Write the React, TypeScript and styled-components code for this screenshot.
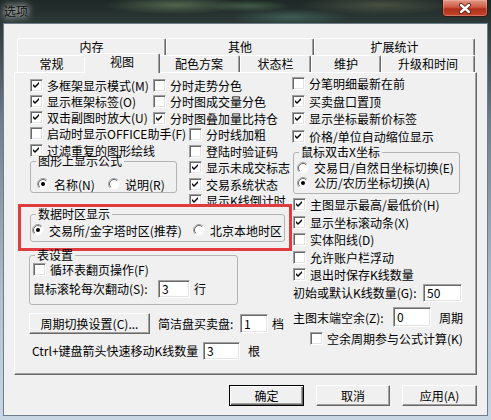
import React from 'react';
import styled, { createGlobalStyle } from 'styled-components';

const GlobalStyle = createGlobalStyle`
  html, body {
    margin: 0;
    padding: 0;
    background: #1f2a28;
  }

  body {
    font-family: "Noto Sans CJK SC", "Noto Sans", sans-serif;
    font-size: 12px;
    color: #000;
  }

  * {
    box-sizing: border-box;
  }
`;

const Window = styled.div`
  width: 491px;
  height: 420px;
  display: flex;
  flex-direction: column;
  overflow: hidden;
  padding: 0 3px 4px 3px;
  background:
    radial-gradient(ellipse 70px 9px at 175px 5px, rgba(140, 170, 120, 0.45), transparent),
    radial-gradient(ellipse 60px 8px at 290px 17px, rgba(90, 150, 130, 0.4), transparent),
    radial-gradient(ellipse 80px 10px at 380px 5px, rgba(160, 160, 120, 0.3), transparent),
    radial-gradient(ellipse 40px 6px at 250px 6px, rgba(110, 160, 110, 0.4), transparent),
    linear-gradient(180deg, #1e2826 0px, #2c3937 22px, #6d7d8a 120px, #b2c1d0 300px, #c8d6e4 420px);
`;

const TitleBar = styled.div`
  height: 23px;
  flex: none;
  display: flex;
  align-items: flex-start;
  justify-content: space-between;
  padding-left: 1px;
`;

const Title = styled.span`
  line-height: 22px;
  font-size: 12px;
  color: #111;
  text-shadow: 0 0 6px rgba(255, 255, 255, 0.95), 0 0 10px rgba(255, 255, 255, 0.8);
`;

const CloseBtn = styled.div`
  width: 46px;
  height: 18px;
  margin-top: -1px;
  border: 1px solid #3a1610;
  border-radius: 0 0 4px 4px;
  background: linear-gradient(180deg, #e09a88 0%, #cf5a44 45%, #b1301c 55%, #c2472e 100%);
  box-shadow: inset 0 0 0 1px rgba(255, 200, 190, 0.35);
  display: flex;
  align-items: center;
  justify-content: center;
`;

const Client = styled.div`
  flex: 1;
  background: #f0f0f0;
  border: 1px solid #6e7d8b;
  padding: 14px 0 0 10px;
`;

const TabStrip = styled.div`
  position: relative;
  z-index: 2;
  display: flex;
  flex-direction: column;
  margin-left: 3px;
  width: 458px;
`;

const TabRow = styled.div`
  display: flex;
  height: 17px;
  align-items: flex-end;
`;

const Tab = styled.div<{ $w: number; $active?: boolean }>`
  position: relative;
  z-index: ${(p) => (p.$active ? 3 : 1)};
  width: ${(p) => (p.$active ? p.$w + 4 : p.$w)}px;
  height: ${(p) => (p.$active ? 20 : 17)}px;
  margin: ${(p) => (p.$active ? '0 -2px -1px' : '0')};
  background: #f0f0f0;
  border-top: 1px solid #fff;
  border-left: 1px solid #fff;
  border-right: 1px solid #696969;
  border-radius: 2px 2px 0 0;
  box-shadow: inset -1px 0 #a0a0a0;
  text-align: center;
  line-height: 16px;
  white-space: nowrap;
`;

const Page = styled.div`
  position: relative;
  z-index: 1;
  width: 463px;
  height: 303px;
  border-top: 1px solid #fff;
  border-left: 1px solid #fff;
  border-right: 1px solid #696969;
  border-bottom: 1px solid #696969;
  box-shadow: inset -1px -1px #a0a0a0;
  display: flex;
`;

const LeftArea = styled.div`
  width: 277px;
  flex: none;
  display: flex;
  flex-direction: column;
`;

const TopLeft = styled.div`
  height: 131px;
  overflow: hidden;
  display: flex;
`;

const Column = styled.div<{ $w?: number; $left?: number; $top?: number }>`
  ${(p) => (p.$w ? `width: ${p.$w}px; flex: none;` : 'flex: 1;')}
  padding-left: ${(p) => p.$left ?? 0}px;
  padding-top: ${(p) => p.$top ?? 0}px;
  display: flex;
  flex-direction: column;
`;

const Row = styled.div<{ $h?: number; $indent?: number; $mt?: number }>`
  display: flex;
  align-items: center;
  flex: none;
  height: ${(p) => p.$h ?? 16.5}px;
  padding-left: ${(p) => p.$indent ?? 0}px;
  margin-top: ${(p) => p.$mt ?? 0}px;
  white-space: nowrap;
`;

const Box = styled.span`
  flex: none;
  width: 13px;
  height: 13px;
  margin-right: 4px;
  background: #fff;
  border-top: 1px solid #a0a0a0;
  border-left: 1px solid #a0a0a0;
  border-right: 1px solid #fff;
  border-bottom: 1px solid #fff;
  box-shadow: inset 1px 1px #696969, inset -1px -1px #e3e3e3;
  display: flex;
  align-items: center;
  justify-content: center;
`;

const Option = styled.span<{ $w?: number }>`
  display: flex;
  align-items: center;
  gap: 5px;
  ${(p) => (p.$w ? `width: ${p.$w}px; flex: none;` : '')}
`;

const Group = styled.fieldset<{ $w: number; $ml?: number; $mt?: number }>`
  margin: ${(p) => p.$mt ?? 0}px 0 0 ${(p) => p.$ml ?? 0}px;
  padding: 0;
  min-width: 0;
  width: ${(p) => p.$w}px;
  flex: none;
  border: 1px solid #b4b4b4;
  border-radius: 3px;
`;

const GroupTitle = styled.legend`
  margin-left: 5px;
  padding: 0 2px;
  line-height: 12px;
  font-size: 12px;
`;

const GroupBody = styled.div<{ $pad: string }>`
  padding: ${(p) => p.$pad};
  display: flex;
  flex-direction: column;
`;

const Highlight = styled.div`
  margin: 0 0 0 3px;
  width: 274px;
  height: 47px;
  flex: none;
  border: 3px solid #e03b3f;
  padding-left: 9px;
`;

const FieldLabel = styled.span<{ $w: number }>`
  display: inline-block;
  width: ${(p) => p.$w}px;
  flex: none;
`;

const Field = styled.div<{ $w: number; $h: number }>`
  width: ${(p) => p.$w}px;
  height: ${(p) => p.$h}px;
  flex: none;
  background: #fff;
  border-top: 1px solid #a0a0a0;
  border-left: 1px solid #a0a0a0;
  border-right: 1px solid #fff;
  border-bottom: 1px solid #fff;
  box-shadow: inset 1px 1px #696969, inset -1px -1px #e3e3e3;
  padding-left: 3px;
  line-height: ${(p) => p.$h - 2}px;
`;

const Unit = styled.span<{ $ml: number }>`
  margin-left: ${(p) => p.$ml}px;
`;

const Button = styled.div<{ $w: number; $default?: boolean }>`
  width: ${(p) => p.$w}px;
  height: 21px;
  flex: none;
  display: flex;
  align-items: center;
  justify-content: center;
  background: #f0f0f0;
  white-space: nowrap;
  border: 1px solid;
  border-color: ${(p) => (p.$default ? '#000' : '#fff #696969 #696969 #fff')};
  box-shadow: ${(p) =>
    p.$default
      ? 'inset 1px 1px #fff, inset -1px -1px #696969, inset -2px -2px #a0a0a0'
      : 'inset -1px -1px #a0a0a0'};
`;

const LowerRow = styled.div<{ $mt: number; $left: number; $h: number }>`
  display: flex;
  align-items: center;
  margin-top: ${(p) => p.$mt}px;
  padding-left: ${(p) => p.$left}px;
  height: ${(p) => p.$h}px;
  white-space: nowrap;
`;

const RightArea = styled.div`
  flex: 1;
  padding-top: 2px;
  display: flex;
  flex-direction: column;
`;

const BottomBar = styled.div`
  width: 463px;
  margin-top: 10px;
  display: flex;
  justify-content: flex-end;
  gap: 12px;
`;

const CloseGlyph = () => (
  <svg width="14" height="11" viewBox="0 0 14 11">
    <path d="M3 2 L11 9 M11 2 L3 9" stroke="#4a1a12" strokeWidth="4" strokeLinecap="round" />
    <path d="M3 2 L11 9 M11 2 L3 9" stroke="#fff" strokeWidth="2.4" strokeLinecap="round" />
  </svg>
);

const Check = ({ on, children }: { on?: boolean; children: React.ReactNode }) => (
  <>
    <Box>
      {on && (
        <svg width="9" height="9" viewBox="0 0 9 9">
          <polygon points="1,3 3,5 7,1 7,3 3,7 1,5" fill="#000" />
        </svg>
      )}
    </Box>
    <span>{children}</span>
  </>
);

const Radio = ({ on, w, children }: { on?: boolean; w?: number; children: React.ReactNode }) => (
  <Option $w={w}>
    <svg width="12" height="12" viewBox="0 0 12 12" style={{ flex: 'none' }}>
      <circle cx="6" cy="6" r="5.5" fill="#fff" />
      <path d="M9.9 2.1 A5.5 5.5 0 0 0 2.1 9.9" stroke="#a0a0a0" fill="none" />
      <path d="M2.1 9.9 A5.5 5.5 0 0 0 9.9 2.1" stroke="#f4f4f4" fill="none" />
      <path d="M9.2 2.8 A4.5 4.5 0 0 0 2.8 9.2" stroke="#696969" fill="none" />
      {on && <circle cx="6" cy="6" r="2" fill="#000" />}
    </svg>
    <span>{children}</span>
  </Option>
);

const backTabs = [
  { label: '内存', w: 149 },
  { label: '其他', w: 148 },
  { label: '扩展统计', w: 161 },
];

const frontTabs = [
  { label: '常规', w: 69 },
  { label: '视图', w: 72, active: true },
  { label: '配色方案', w: 82 },
  { label: '状态栏', w: 71 },
  { label: '维护', w: 70 },
  { label: '升级和时间', w: 94 },
];

const App = () => {
  return (
    <>
      <GlobalStyle />
      <Window>
        <TitleBar>
          <Title>选项</Title>
          <CloseBtn>
            <CloseGlyph />
          </CloseBtn>
        </TitleBar>
        <Client>
          <TabStrip>
            <TabRow>
              {backTabs.map((t) => (
                <Tab key={t.label} $w={t.w}>
                  {t.label}
                </Tab>
              ))}
            </TabRow>
            <TabRow>
              {frontTabs.map((t) => (
                <Tab key={t.label} $w={t.w} $active={t.active}>
                  {t.label}
                </Tab>
              ))}
            </TabRow>
          </TabStrip>
          <Page>
            <LeftArea>
              <TopLeft>
                <Column $w={138} $left={15} $top={4}>
                  <Row $h={16.25}><Check on>多框架显示模式(M)</Check></Row>
                  <Row $h={16.25}><Check on>显示框架标签(O)</Check></Row>
                  <Row $h={16.25}><Check on>双击副图时放大(U)</Check></Row>
                  <Row $h={16.25}><Check>启动时显示OFFICE助手(F)</Check></Row>
                  <Row $h={16.25}><Check on>过滤重复的图形绘线</Check></Row>
                  <Group $w={147} $mt={-3}>
                    <GroupTitle>图形上显示公式</GroupTitle>
                    <GroupBody $pad="9px 0 0 6px">
                      <Row $h={16}>
                        <Radio on w={71}>名称(N)</Radio>
                        <Radio>说明(R)</Radio>
                      </Row>
                    </GroupBody>
                  </Group>
                </Column>
                <Column $top={4}>
                  <Row><Check>分时走势分色</Check></Row>
                  <Row><Check>分时图成交量分色</Check></Row>
                  <Row><Check on>分时图叠加量比持仓</Check></Row>
                  <Row $indent={36}><Check>分时线加粗</Check></Row>
                  <Row $indent={36}><Check>登陆时验证码</Check></Row>
                  <Row $indent={36}><Check on>显示未成交标志</Check></Row>
                  <Row $indent={36}><Check on>交易系统状态</Check></Row>
                  <Row $indent={36}><Check on>显示K线倒计时</Check></Row>
                </Column>
              </TopLeft>
              <Highlight>
                <Group $w={255} $mt={1}>
                  <GroupTitle>数据时区显示</GroupTitle>
                  <GroupBody $pad="2px 0 3px 1px">
                    <Row $h={16}>
                      <Radio on w={161}>交易所/金字塔时区(推荐)</Radio>
                      <Radio>北京本地时区</Radio>
                    </Row>
                  </GroupBody>
                </Group>
              </Highlight>
              <Group $w={209} $ml={14} $mt={-2}>
                <GroupTitle>表设置</GroupTitle>
                <GroupBody $pad="0 0 6px 3px">
                  <Row $h={17}><Check>循环表翻页操作(F)</Check></Row>
                  <Row $h={19} $mt={1}>
                    <FieldLabel $w={125}>鼠标滚轮每次翻动(S):</FieldLabel>
                    <Field $w={32} $h={18}>3</Field>
                    <Unit $ml={4}>行</Unit>
                  </Row>
                </GroupBody>
              </Group>
              <LowerRow $mt={7} $left={14} $h={22}>
                <Button $w={121}>周期切换设置(C)...</Button>
                <Unit $ml={8}>
                  <FieldLabel $w={82}>简洁盘买卖盘:</FieldLabel>
                </Unit>
                <Field $w={28} $h={19}>1</Field>
                <Unit $ml={4}>档</Unit>
              </LowerRow>
              <LowerRow $mt={7} $left={17} $h={19}>
                <FieldLabel $w={171}>Ctrl+键盘箭头快速移动K线数量</FieldLabel>
                <Field $w={37} $h={18}>3</Field>
                <Unit $ml={8}>根</Unit>
              </LowerRow>
            </LeftArea>
            <RightArea>
              <Row $h={17.5}><Check>分笔明细最新在前</Check></Row>
              <Row $h={17.5}><Check on>买卖盘口置顶</Check></Row>
              <Row $h={17.5}><Check on>显示坐标最新价标签</Check></Row>
              <Row $h={17.5}><Check on>价格/单位自动缩位显示</Check></Row>
              <Group $w={167} $ml={1} $mt={1}>
                <GroupTitle>鼠标双击X坐标</GroupTitle>
                <GroupBody $pad="2px 0 3px 3px">
                  <Row $h={15}><Radio>交易日/自然日坐标切换(E)</Radio></Row>
                  <Row $h={15}><Radio on>公历/农历坐标切换(A)</Radio></Row>
                </GroupBody>
              </Group>
              <Row $h={17.5} $indent={1} $mt={2}><Check on>主图显示最高/最低价(H)</Check></Row>
              <Row $h={17.5} $indent={1}><Check on>显示坐标滚动条(X)</Check></Row>
              <Row $h={17.5} $indent={1}><Check>实体阳线(D)</Check></Row>
              <Row $h={17.5} $indent={1}><Check>允许账户栏浮动</Check></Row>
              <Row $h={17.5} $indent={1}><Check on>退出时保存K线数量</Check></Row>
              <Row $h={18} $indent={1}>
                <FieldLabel $w={130}>初始或默认K线数量(G):</FieldLabel>
                <Field $w={39} $h={18}>50</Field>
              </Row>
              <Row $h={20} $indent={1} $mt={5.5}>
                <FieldLabel $w={100}>主图末端空余(Z):</FieldLabel>
                <Field $w={38} $h={20}>0</Field>
                <Unit $ml={8}>周期</Unit>
              </Row>
              <Row $h={16} $indent={18} $mt={3}><Check>空余周期参与公式计算(K)</Check></Row>
            </RightArea>
          </Page>
          <BottomBar>
            <Button $w={75} $default>确定</Button>
            <Button $w={74}>取消</Button>
            <Button $w={75}>应用(A)</Button>
          </BottomBar>
        </Client>
      </Window>
    </>
  );
};

export default App;
